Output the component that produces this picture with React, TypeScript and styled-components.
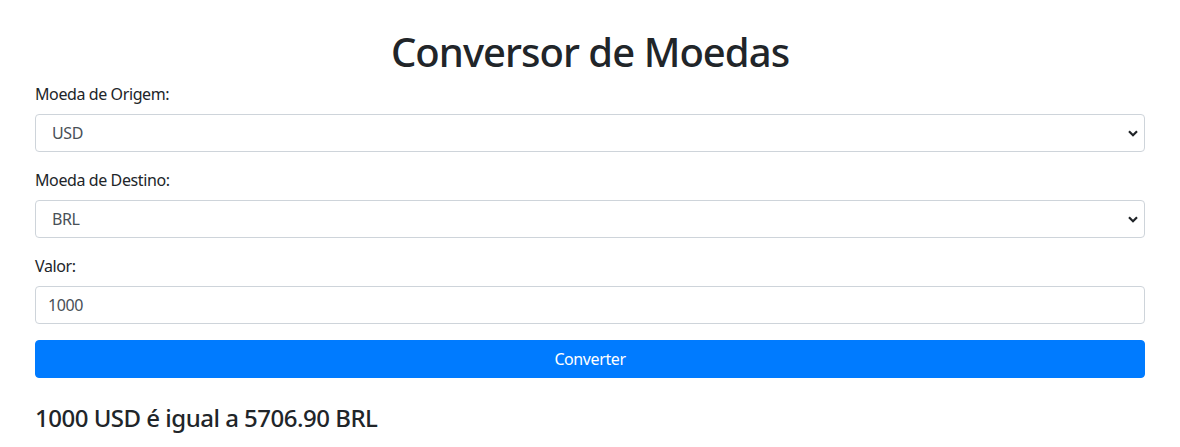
import React, { useState } from "react";
import styled, { createGlobalStyle } from "styled-components";

const Global = createGlobalStyle`
  * { box-sizing: border-box; }
  body {
    margin: 0;
    font-family: "Noto Sans", "Open Sans", sans-serif;
    font-size: 16px;
    line-height: 1.5;
    letter-spacing: -0.025em;
    color: #212529;
    background: #fff;
  }
`;

const Container = styled.div`
  max-width: 1140px;
  margin: 0 auto;
  padding: 28px 15px 0;
`;

const Title = styled.h1`
  margin: 0 0 6px;
  font-size: 40px;
  font-weight: 500;
  line-height: 1.2;
  letter-spacing: -0.024em;
  text-align: center;
`;

const Group = styled.div`
  margin-bottom: 16px;
`;

const Label = styled.label`
  display: block;
  margin-bottom: 8px;
  font-size: 16px;
  line-height: 24px;
`;

const chevron =
  "url(\"data:image/svg+xml,%3Csvg xmlns='http://www.w3.org/2000/svg' width='10' height='7' viewBox='0 0 10 7'%3E%3Cpath d='M1 1.2l4 4 4-4' fill='none' stroke='%23212529' stroke-width='2.2'/%3E%3C/svg%3E\")";

const Select = styled.select`
  display: block;
  width: 100%;
  height: 38px;
  padding: 6px 30px 6px 16px;
  font: inherit;
  font-size: 16px;
  letter-spacing: inherit;
  color: #495057;
  background: #fff ${chevron} no-repeat right 6px center;
  border: 1px solid #ced4da;
  border-radius: 4px;
  appearance: none;
  -webkit-appearance: none;
`;

const Input = styled.input`
  display: block;
  width: 100%;
  height: 38px;
  padding: 6px 12px;
  font: inherit;
  font-size: 16px;
  letter-spacing: inherit;
  color: #495057;
  background: #fff;
  border: 1px solid #ced4da;
  border-radius: 4px;
`;

const Button = styled.button`
  display: block;
  width: 100%;
  height: 38px;
  padding: 6px 12px;
  font: inherit;
  font-size: 16px;
  letter-spacing: inherit;
  color: #fff;
  background: #007bff;
  border: 1px solid #007bff;
  border-radius: 4px;
  cursor: pointer;
`;

const Result = styled.h4`
  margin: 26px 0 8px;
  font-size: 24px;
  font-weight: 500;
  line-height: 1.2;
  letter-spacing: -0.021em;
`;

export default function App() {
  const [from, setFrom] = useState("USD");
  const [to, setTo] = useState("BRL");
  const [value, setValue] = useState("1000");
  return (
    <>
      <Global />
      <Container>
        <Title>Conversor de Moedas</Title>
        <Group>
          <Label>Moeda de Origem:</Label>
          <Select value={from} onChange={(e) => setFrom(e.target.value)}>
            <option>USD</option>
            <option>EUR</option>
            <option>BRL</option>
          </Select>
        </Group>
        <Group>
          <Label>Moeda de Destino:</Label>
          <Select value={to} onChange={(e) => setTo(e.target.value)}>
            <option>BRL</option>
            <option>USD</option>
            <option>EUR</option>
          </Select>
        </Group>
        <Group>
          <Label>Valor:</Label>
          <Input value={value} onChange={(e) => setValue(e.target.value)} />
        </Group>
        <Button>Converter</Button>
        <Result>1000 USD é igual a 5706.90 BRL</Result>
      </Container>
    </>
  );
}
